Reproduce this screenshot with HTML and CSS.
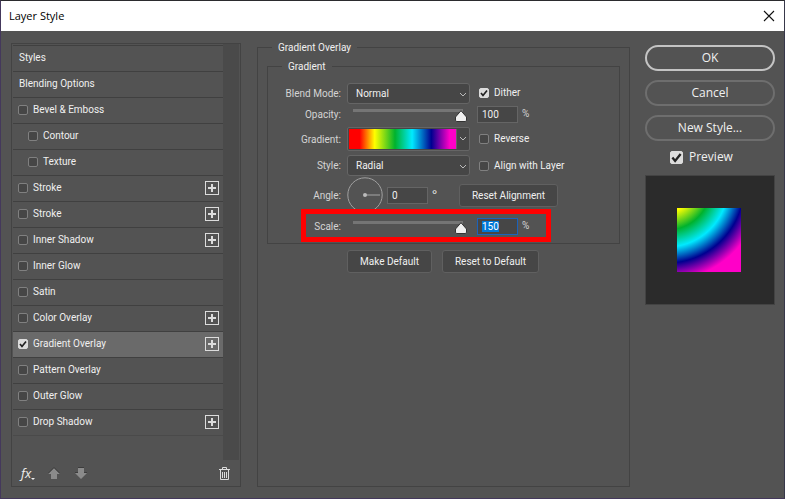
FILE: index.html
```html
<!DOCTYPE html>
<html lang="en">
  <head>
    <meta charset="UTF-8" />
    <meta name="viewport" content="width=device-width, initial-scale=1.0" />
    <title>Layer Style</title>
    <link rel="stylesheet" href="styles.css">
  </head>
  <body>
    <div class="dialog">
      <header class="title-bar">
        <h1>Layer Style</h1>
        <button class="close-btn" aria-label="Close">
          <svg width="12" height="12" viewBox="0 0 12 12"><path d="M1 1l10 10M11 1L1 11" fill="none" stroke="#111" stroke-width="1.1"/></svg>
        </button>
      </header>

      <div class="content">
        <nav class="sidebar">
          <div class="list-area">
            <ul class="style-list">
              <li><a href="#styles">Styles</a></li>
              <li><a href="#blending">Blending Options</a></li>
              <li><label><input type="checkbox" />Bevel &amp; Emboss</label></li>
              <li class="nested"><label><input type="checkbox" />Contour</label></li>
              <li class="nested"><label><input type="checkbox" />Texture</label></li>
              <li><label><input type="checkbox" />Stroke</label><button class="add-btn" aria-label="Add stroke"></button></li>
              <li><label><input type="checkbox" />Stroke</label><button class="add-btn" aria-label="Add stroke"></button></li>
              <li><label><input type="checkbox" />Inner Shadow</label><button class="add-btn" aria-label="Add inner shadow"></button></li>
              <li><label><input type="checkbox" />Inner Glow</label></li>
              <li><label><input type="checkbox" />Satin</label></li>
              <li><label><input type="checkbox" />Color Overlay</label><button class="add-btn" aria-label="Add color overlay"></button></li>
              <li class="selected"><label><input type="checkbox" checked />Gradient Overlay</label><button class="add-btn" aria-label="Add gradient overlay"></button></li>
              <li><label><input type="checkbox" />Pattern Overlay</label></li>
              <li><label><input type="checkbox" />Outer Glow</label></li>
              <li><label><input type="checkbox" />Drop Shadow</label><button class="add-btn" aria-label="Add drop shadow"></button></li>
            </ul>
            <div class="scroll-track"></div>
          </div>
          <div class="toolbar">
            <button class="fx-btn" aria-label="Effects menu">
              <span>fx</span>
              <svg width="4" height="2" viewBox="0 0 4 2"><path d="M0 0h4L2 2z" fill="#eee"/></svg>
            </button>
            <button aria-label="Move up">
              <svg width="12" height="12" viewBox="0 0 12 12"><path d="M6 1l6 6H9v5H3V7H0z" fill="#8b8b8b"/><path d="M0 6.500L6 .5l6 6" fill="none" stroke="#3c3c3c"/></svg>
            </button>
            <button aria-label="Move down">
              <svg width="12" height="12" viewBox="0 0 12 12"><path d="M3 0h6v6h3l-6 6-6-6h3z" fill="#8b8b8b"/><path d="M3 .5h6M0 5.500h3M9 5.500h3" stroke="#3c3c3c"/></svg>
            </button>
            <button class="trash-btn" aria-label="Delete effect">
              <svg width="11" height="13" viewBox="0 0 11 13" fill="none" stroke="#ddd"><path d="M0 2.500h11M3.500 2.500v-2h4v2M1.500 3v9.500h8V3M3.500 5v6M5.500 5v6M7.500 5v6"/></svg>
            </button>
          </div>
        </nav>

        <fieldset class="settings">
          <legend>Gradient Overlay</legend>
          <fieldset class="group">
            <legend>Gradient</legend>
            <div class="row blend-row">
              <label class="name" for="blend-mode">Blend Mode:</label>
              <select id="blend-mode"><option>Normal</option></select>
              <label class="check"><input type="checkbox" checked />Dither</label>
            </div>
            <div class="row slider-row">
              <label class="name" for="opacity">Opacity:</label>
              <input type="range" min="0" max="100" value="100" aria-label="Opacity slider" />
              <div class="value"><input type="text" id="opacity" value="100" />%</div>
            </div>
            <div class="row gradient-row">
              <label class="name" for="gradient">Gradient:</label>
              <button class="gradient-btn" id="gradient"><span class="gradient-bar"></span></button>
              <label class="check"><input type="checkbox" />Reverse</label>
            </div>
            <div class="row style-row">
              <label class="name" for="style">Style:</label>
              <select id="style"><option>Radial</option></select>
              <label class="check"><input type="checkbox" />Align with Layer</label>
            </div>
            <div class="row angle-row">
              <label class="name" for="angle">Angle:</label>
              <div class="angle">
                <svg width="36" height="36" viewBox="0 0 36 36"><circle cx="18" cy="18" r="17.200" fill="none" stroke="#a0a0a0"/><path d="M18 18h15" stroke="#8a8a8a" stroke-width="1.500"/><circle cx="18" cy="18" r="2" fill="#bbb"/></svg>
                <input type="text" id="angle" value="0" />
                <span class="degree">°</span>
              </div>
              <button class="btn">Reset Alignment</button>
            </div>
            <div class="row slider-row scale-row">
              <label class="name" for="scale">Scale:</label>
              <input type="range" min="0" max="150" value="150" aria-label="Scale slider" />
              <div class="value"><input type="text" id="scale" class="active" value="150" />%</div>
              <div class="highlight"></div>
            </div>
          </fieldset>
          <div class="defaults">
            <button class="btn">Make Default</button>
            <button class="btn">Reset to Default</button>
          </div>
        </fieldset>

        <aside class="actions">
          <button class="pill primary">OK</button>
          <button class="pill">Cancel</button>
          <button class="pill">New Style...</button>
          <label class="preview-check"><input type="checkbox" checked />Preview</label>
          <div class="preview"><div class="swatch"></div></div>
        </aside>
      </div>
    </div>

    <script>
      const scaleInput = document.getElementById("scale");
      scaleInput.focus();
      scaleInput.select();
    </script>
  </body>
</html>
```

FILE: styles.css
```css
* {
  margin: 0;
  padding: 0;
  box-sizing: border-box;
}

body {
  background-color: #535353;
  font-family: Roboto, "Open Sans", sans-serif;
  font-size: 10px;
  line-height: 14px;
  color: #f0f0f0;
}

button,
input,
select {
  font: inherit;
  color: inherit;
}

button {
  background: none;
  border: none;
}

svg {
  display: block;
}

.dialog {
  display: flex;
  flex-direction: column;
  min-height: 100vh;
  border: 1px solid #44385c;
  border-top-color: #2b2b2e;
  border-right-color: #38384a;
}

.title-bar {
  display: flex;
  align-items: center;
  justify-content: space-between;
  height: 30px;
  padding: 0 9px 0 8px;
  background-color: #fff;
  color: #000;
}

h1 {
  font-family: "Open Sans", sans-serif;
  font-size: 11px;
  font-weight: normal;
}

.content {
  flex: 1;
  display: flex;
  padding: 9px 9px 11px 10px;
}

/* effects list */
.sidebar {
  display: flex;
  flex-direction: column;
  width: 230px;
  margin-top: 3px;
  border: 1px solid #434343;
}

.list-area {
  flex: 1;
  display: flex;
  padding: 0 1px;
}

.style-list {
  flex: 1;
  list-style: none;
  padding-top: 1px;
}

.style-list li {
  display: flex;
  align-items: center;
  justify-content: space-between;
  height: 26px;
  padding: 0 4px 2px 5px;
  border-top: 1px solid #404040;
}

.style-list li:last-child {
  height: 27px;
  border-bottom: 1px solid #4a4a4a;
}

.style-list .nested {
  padding-left: 15px;
}

.style-list .selected {
  background-color: #6a6a6a;
}

.style-list a {
  padding-left: 1px;
  color: inherit;
  text-decoration: none;
}

.style-list label,
.check,
.preview-check {
  display: flex;
  align-items: center;
  gap: 5px;
}

input[type="checkbox"] {
  appearance: none;
  width: 10px;
  height: 10px;
  border: 1px solid #808080;
  border-radius: 2px;
  background-color: #464646;
}

input[type="checkbox"]:checked {
  border-color: #dcdcdc;
  background: #dcdcdc url("data:image/svg+xml,%3Csvg xmlns='http://www.w3.org/2000/svg' viewBox='0 0 8 8'%3E%3Cpath d='M1 4l2 2.500 4-5' fill='none' stroke='%23222' stroke-width='1.700'/%3E%3C/svg%3E") center / 100% no-repeat;
}

.add-btn {
  width: 14px;
  height: 14px;
  border: 1px solid #dcdcdc;
  background:
    linear-gradient(#dcdcdc, #dcdcdc) center / 8px 2px no-repeat,
    linear-gradient(#dcdcdc, #dcdcdc) center / 2px 8px no-repeat;
}

.scroll-track {
  width: 16px;
  background-color: #4a4a4a;
}

.toolbar {
  display: flex;
  align-items: center;
  gap: 15px;
  height: 26px;
  padding: 0 10px 0 9px;
}

.fx-btn {
  display: flex;
  align-items: flex-end;
  width: 12px;
  font-family: "Open Sans", sans-serif;
  font-size: 13px;
  font-style: italic;
}

.fx-btn svg {
  flex: none;
}

.trash-btn {
  margin-left: auto;
}

/* settings */
.settings {
  flex: 1;
  min-width: 0;
  margin: 0 15px 0 16px;
  padding: 5px 9px 0;
  border: 1px solid #434343;
}

legend {
  margin-left: 5px;
  padding: 2px 6px 0;
  line-height: 12px;
}

.group {
  padding: 9px 0 4px;
  border: 1px solid #434343;
}

.group legend {
  margin-left: 14px;
}

.row {
  display: grid;
  grid-template-columns: 73px 123px 1fr;
  column-gap: 6px;
  align-items: center;
}

.name {
  padding-top: 1px;
  text-align: right;
  color: #d4d4d4;
}

.blend-row {
  height: 22px;
}

.slider-row {
  position: relative;
  height: 20px;
}

.gradient-row {
  height: 30px;
}

.style-row {
  height: 23px;
}

.angle-row {
  height: 36px;
  grid-template-columns: 73px 1fr auto;
  padding-right: 61px;
}

.scale-row {
  height: 26px;
}

select {
  appearance: none;
  height: 21px;
  padding: 1px 8px 0;
  border: 1px solid #656565;
  border-radius: 3px;
  background: #464646 url("data:image/svg+xml,%3Csvg xmlns='http://www.w3.org/2000/svg' viewBox='0 0 8 6'%3E%3Cpath d='M1 1l3 3 3-3' fill='none' stroke='%23bbb'/%3E%3C/svg%3E") right 2px top 8px / 8px 6px no-repeat;
}

.check {
  padding-left: 3px;
}

input[type="text"] {
  width: 41px;
  height: 17px;
  padding: 0 4px;
  border: 1px solid #656565;
  background-color: #464646;
  color: #f0f0f0;
  outline: none;
}

input[type="text"].active {
  border-color: #1c62b9;
}

input::selection {
  background-color: #0078d7;
  color: #fff;
}

input[type="range"] {
  appearance: none;
  width: 120px;
  height: 14px;
  margin-top: 4px;
  background: linear-gradient(#757575, #757575) 6px 0 / 110px 3px no-repeat;
}

input[type="range"]::-webkit-slider-thumb {
  appearance: none;
  width: 12px;
  height: 12px;
  background: url("data:image/svg+xml,%3Csvg xmlns='http://www.w3.org/2000/svg' viewBox='0 0 12 12'%3E%3Cpath d='M6 .7L11.500 7v3.200q0 1.300-1.300 1.300H1.800Q.5 11.500.5 10.200V7z' fill='%23f0f0f0' stroke='%23333'/%3E%3C/svg%3E") no-repeat;
}

.value {
  display: flex;
  align-items: center;
  gap: 4px;
  padding-left: 1px;
  color: #d4d4d4;
}

.gradient-btn {
  height: 24px;
  padding: 1px 12px 1px 1px;
  border: 1px solid #656565;
  border-radius: 2px;
  background: #464646 url("data:image/svg+xml,%3Csvg xmlns='http://www.w3.org/2000/svg' viewBox='0 0 8 6'%3E%3Cpath d='M1 1l3 3 3-3' fill='none' stroke='%23bbb'/%3E%3C/svg%3E") right 2px center / 8px 6px no-repeat;
}

.gradient-bar {
  display: block;
  height: 100%;
  border-right: 1px solid #656565;
  background: linear-gradient(90deg, #f00 10%, #ff0 24%, #00b22d 43%, #00eaff 59%, #000090 77%, #ff00c8 94%);
}

.angle {
  display: flex;
  align-items: center;
  gap: 4px;
}

.degree {
  font-family: "Open Sans", sans-serif;
  font-size: 12px;
}

.btn {
  height: 23px;
  padding: 1px 12px 0;
  border: 1px solid #606060;
  border-radius: 3px;
  background-color: #464646;
}

.highlight {
  position: absolute;
  top: -4px;
  left: 33px;
  width: 250px;
  height: 33px;
  border: 5px solid #f00;
  pointer-events: none;
}

.defaults {
  display: flex;
  gap: 10px;
  padding: 6px 0 0 80px;
}

/* buttons and preview */
.actions {
  display: flex;
  flex-direction: column;
  width: 130px;
  padding-top: 5px;
  font-family: "Open Sans", sans-serif;
}

.pill {
  height: 26px;
  margin-bottom: 9px;
  border: 2px solid #6e6e6e;
  border-radius: 13px;
  font-size: 12px;
}

.primary {
  border-color: #c4c4c4;
}

.preview-check {
  gap: 6px;
  padding-left: 25px;
  font-size: 12px;
}

.preview-check input[type="checkbox"] {
  width: 13px;
  height: 13px;
}

.preview {
  display: flex;
  align-items: center;
  justify-content: center;
  height: 130px;
  margin-top: 11px;
  padding-right: 2px;
  border: 1px solid #434343;
  background-color: #2b2b2b;
}

.swatch {
  width: 64px;
  height: 64px;
  background: radial-gradient(circle at -10px -22px, #ff0 26px, #00b22d 44px, #00eaff 61px, #000090 77px, #ff00c8 94px);
}
```
